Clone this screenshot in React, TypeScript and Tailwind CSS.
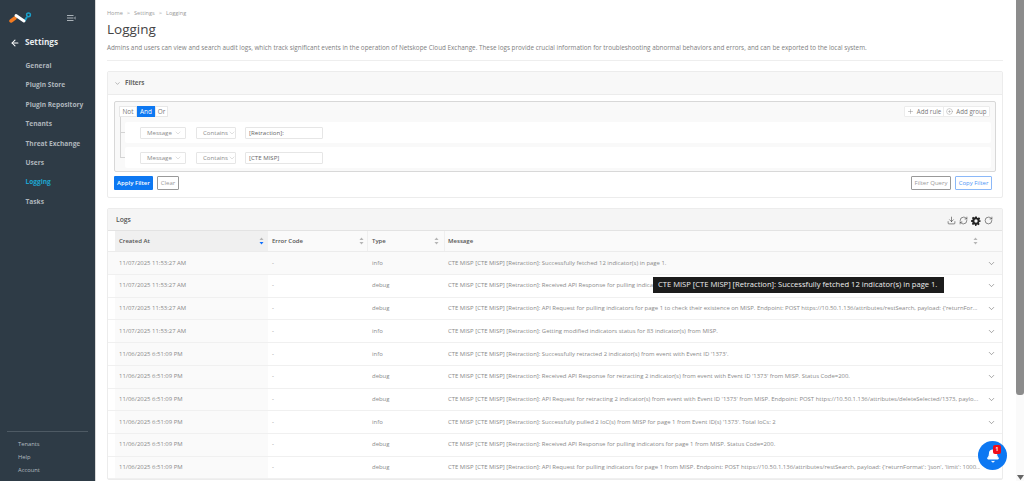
import { ChevronDown, ArrowLeft, Plus, CirclePlus, Download, RefreshCw, RotateCw, Bell } from "lucide-react";

const nav = ["General", "Plugin Store", "Plugin Repository", "Tenants", "Threat Exchange", "Users", "Logging", "Tasks"];
const P = "CTE MISP [CTE MISP] [Retraction]: ";
const rows: [string, string, string][] = [
  ["11/07/2025 11:53:27 AM", "info", "Successfully fetched 12 indicator(s) in page 1."],
  ["11/07/2025 11:53:27 AM", "debug", "Received API Response for pulling indicators for page 1 from MISP. Status Code=200."],
  ["11/07/2025 11:53:27 AM", "debug", "API Request for pulling indicators for page 1 to check their existence on MISP. Endpoint: POST https://10.50.1.136/attributes/restSearch, payload: {'returnFor..."],
  ["11/07/2025 11:53:27 AM", "info", "Getting modified indicators status for 83 indicator(s) from MISP."],
  ["11/06/2025 6:51:09 PM", "info", "Successfully retracted 2 indicator(s) from event with Event ID '1373'."],
  ["11/06/2025 6:51:09 PM", "debug", "Received API Response for retracting 2 indicator(s) from event with Event ID '1373' from MISP. Status Code=200."],
  ["11/06/2025 6:51:09 PM", "debug", "API Request for retracting 2 indicator(s) from event with Event ID '1373' from MISP. Endpoint: POST https://10.50.1.136/attributes/deleteSelected/1373, paylo..."],
  ["11/06/2025 6:51:09 PM", "info", "Successfully pulled 2 IoC(s) from MISP for page 1 from Event ID(s) '1373'. Total IoCs: 2"],
  ["11/06/2025 6:51:09 PM", "debug", "Received API Response for pulling indicators for page 1 from MISP. Status Code=200."],
  ["11/06/2025 6:51:09 PM", "debug", "API Request for pulling indicators for page 1 from MISP. Endpoint: POST https://10.50.1.136/attributes/restSearch, payload: {'returnFormat': 'json', 'limit': 1000..."],
];

function Sort({ active }: { active?: boolean }) {
  return (
    <svg width="5" height="8" viewBox="0 0 5 8" className="shrink-0">
      <path d="M2.500 0.500 L4.500 3 H0.500 Z" fill="#b5b5b5" />
      <path d="M2.500 7.500 L4.500 5 H0.500 Z" fill={active ? "#0d6efd" : "#b5b5b5"} />
    </svg>
  );
}

function Select({ label, w }: { label: string; w: string }) {
  return (
    <div className={`${w} h-[12px] bg-white border border-[#e6e6e6] rounded-[1px] flex items-center justify-between pl-[6px] pr-[3px] text-[6.1px] text-[#8c8c8c]`}>
      <span>{label}</span>
      <ChevronDown size={8} strokeWidth={1} color="#a0a0a0" className="shrink-0" />
    </div>
  );
}

function Rule({ value }: { value: string }) {
  return (
    <div className="h-[21px] ml-[6px] bg-white rounded-[2px] flex items-center pl-[15px] relative">
      <span className="absolute left-[-5px] top-[10px] w-[5px] border-b border-[#d4d4d4]" />
      <Select label="Message" w="w-[46px]" />
      <div className="w-[10px]" />
      <Select label="Contains" w="w-[40px]" />
      <div className="w-[9px]" />
      <div className="w-[78px] h-[12px] border border-[#e6e6e6] rounded-[1px] flex items-center pl-[3px] text-[6.1px] text-[#666]">{value}</div>
    </div>
  );
}

export default function App() {
  return (
    <div className="h-[481px] w-[1024px] overflow-hidden flex bg-white font-['Open_Sans',sans-serif] relative">
      <aside className="w-[95px] shrink-0 bg-[#2e3b46] flex flex-col">
        <div className="flex items-center h-[36px] pl-[9px] pr-[19px] justify-between">
          <svg width="24" height="14" viewBox="0 0 24 14">
            <path d="M15.500 10 L18 6" fill="none" stroke="#1b9fc9" strokeWidth="2" />
            <path d="M2 10 L6 7" fill="none" stroke="#f47b20" strokeWidth="3.500" strokeLinecap="round" />
            <path d="M7 4.500 L15 10" fill="none" stroke="#fff" strokeWidth="3" strokeLinecap="round" />
            <circle cx="19.500" cy="3.800" r="1.900" fill="none" stroke="#1b9fc9" strokeWidth="1.500" />
          </svg>
          <svg width="9" height="6" viewBox="0 0 9 6" stroke="#aab2b8" strokeWidth="1" fill="none">
            <path d="M0 .5H6.500M0 3H6.500M0 5.500H6.500M9 1.500L7.500 3L9 4.500" />
          </svg>
        </div>
        <div className="flex items-center h-[13px] pl-[10px] gap-[5px] text-white">
          <ArrowLeft size={10} strokeWidth={2.5} />
          <span className="text-[8.2px] font-bold text-[#e8ecef]">Settings</span>
        </div>
        <nav className="flex flex-col mt-[7px]">
          {nav.map((n) => (
            <div key={n} className={`h-[19.45px] flex items-center pl-[25.5px] text-[6.6px] font-bold ${n === "Logging" ? "text-[#1da5cf]" : "text-[#aeb6bc]"}`}>
              {n}
            </div>
          ))}
        </nav>
        <div className="mt-auto mx-[7px] mb-[5px] border-t border-[#4e5a64] pt-[6px] pl-[11px] flex flex-col gap-[1px]">
          {["Tenants", "Help", "Account"].map((n) => (
            <div key={n} className="h-[12px] flex items-center text-[5.8px] text-[#b4bbc0]">{n}</div>
          ))}
        </div>
      </aside>
      <div className="w-[1px] shrink-0 bg-[#d8d8d8]" />

      <main className="w-[907px] shrink-0 pl-[11px]">
        <div className="flex items-center gap-[4px] text-[5.6px] text-[#9b9b9b] pt-[10px] h-[17px]">
          <span>Home</span><span>&gt;</span><span>Settings</span><span>&gt;</span><span>Logging</span>
        </div>
        <h1 className="text-[13.5px] leading-[18px] text-[#444] mt-[3px]">Logging</h1>
        <p className="text-[6.33px] leading-[10px] text-[#808080] mt-[5px] whitespace-nowrap">
          Admins and users can view and search audit logs, which track significant events in the operation of Netskope Cloud Exchange. These logs provide crucial information for troubleshooting abnormal behaviors and errors, and can be exported to the local system.
        </p>
        <div className="border-t border-[#eeeeee] mt-[7px]" />

        <section className="mt-[10px] h-[127px] border border-[#ececec] rounded-[2px] flex flex-col">
          <div className="h-[23px] shrink-0 bg-[#f8f8f8] border-b border-[#ececec] flex items-center pl-[6px] gap-[4px]">
            <ChevronDown size={7} strokeWidth={1.5} color="#666" />
            <span className="text-[6.2px] font-bold text-[#666]">Filters</span>
          </div>
          <div className="px-[6px] pt-[6px]">
            <div className="h-[71px] border border-[#d8d8d8] rounded-[2px] bg-[#f9f9f9] flex flex-col px-[4px] pt-[4px]">
              <div className="flex justify-between pr-[1px]">
                <div className="flex h-[11px] text-[6.4px] bg-white">
                  <span className="w-[18px] border border-[#e8e8e8] text-[#777] flex items-center justify-center">Not</span>
                  <span className="w-[18px] bg-[#0d78f2] text-white flex items-center justify-center">And</span>
                  <span className="w-[13px] border border-[#e8e8e8] text-[#777] flex items-center justify-center">Or</span>
                </div>
                <div className="flex h-[11px] text-[6.2px] text-[#777] bg-white border border-[#ececec] rounded-[1px]">
                  <span className="w-[39px] flex items-center justify-center gap-[3px] border-r border-[#ececec]"><Plus size={7} strokeWidth={1.2} color="#666" />Add rule</span>
                  <span className="w-[45px] flex items-center justify-center gap-[3px]"><CirclePlus size={7} strokeWidth={1} color="#666" />Add group</span>
                </div>
              </div>
              <div className="mt-[5px] flex flex-col gap-[4px] relative">
                <span className="absolute left-[1px] top-[-5px] bottom-[10px] border-l border-[#d4d4d4]" />
                <Rule value="[Retraction]:" />
                <Rule value="[CTE MISP]" />
              </div>
            </div>
            <div className="flex justify-between mt-[4px] pr-[4px] h-[14px] text-[6px]">
              <div className="flex gap-[4px]">
                <span className="w-[39px] bg-[#0d78f2] text-white font-semibold rounded-[1px] flex items-center justify-center">Apply Filter</span>
                <span className="w-[22px] border border-[#999] text-[#999] rounded-[1px] flex items-center justify-center">Clear</span>
              </div>
              <div className="flex gap-[4px]">
                <span className="w-[40px] border border-[#999] text-[#999] rounded-[1px] flex items-center justify-center">Filter Query</span>
                <span className="w-[37px] border border-[#8bb8f8] text-[#4d94f5] rounded-[1px] flex items-center justify-center">Copy Filter</span>
              </div>
            </div>
          </div>
        </section>

        <section className="mt-[10px] border border-[#ececec] rounded-[2px]">
          <div className="h-[22px] bg-[#f5f5f5] border-b border-[#e3e3e3] flex items-center justify-between pl-[8px] pr-[9px] pt-[2px]">
            <span className="text-[6.8px] font-semibold text-[#555]">Logs</span>
            <div className="flex items-center gap-[3px] text-[#333]">
              <Download size={9} strokeWidth={1.5} />
              <RefreshCw size={9} strokeWidth={1.5} />
              <svg width="10" height="10" viewBox="0 0 24 24" fill="#222"><path fillRule="evenodd" d="M10 1h4l.6 3.200 1.900.8 2.700-1.800 2.800 2.800-1.800 2.700.8 1.900L23 10v4l-3.200.6-.8 1.900 1.800 2.700-2.800 2.800-2.700-1.800-1.900.8L13 23.900h-3l-.6-3.200-1.900-.8-2.700 1.800-2.800-2.800 1.800-2.700-.8-1.900L0 14v-4l3.200-.6.8-1.900L2.200 4.800 5 2l2.700 1.800 1.900-.8zM12 8a4 4 0 1 0 0 8 4 4 0 0 0 0-8z" /></svg>
              <RotateCw size={9} strokeWidth={1.5} />
            </div>
          </div>
          <div className="flex h-[21.4px] border-b border-[#ececec] text-[6px] font-semibold text-[#555]">
            <div className="w-[7px] shrink-0" />
            <div className="w-[153px] shrink-0 bg-[#f0f0f0] flex items-center justify-between pl-[4px] pr-[4px]"><span>Created At</span><Sort active /></div>
            <div className="w-[100px] shrink-0 bg-[#fafafa] flex items-center justify-between pl-[4px] pr-[3px] border-r border-[#efefef]"><span>Error Code</span><Sort /></div>
            <div className="w-[77px] shrink-0 bg-[#fafafa] flex items-center justify-between pl-[4px] pr-[5px] border-r border-[#efefef]"><span>Type</span><Sort /></div>
            <div className="flex-1 min-w-0 bg-[#fafafa] flex items-center justify-between pl-[3px] pr-[24px]"><span>Message</span><Sort /></div>
          </div>
          {rows.map((r, i) => (
            <div key={i} className={`flex h-[22.7px] border-b border-[#f0f0f0] text-[5.95px] text-[#8a8a8a] items-stretch ${i === 0 ? "bg-[#fafafa]" : ""}`}>
              <div className="w-[7px] shrink-0" />
              <div className="w-[153px] shrink-0 bg-[#fafafa] flex items-center pl-[4px]">{r[0]}</div>
              <div className="w-[100px] shrink-0 flex items-center pl-[4px]">-</div>
              <div className="w-[77px] shrink-0 flex items-center pl-[4px]">{r[1]}</div>
              <div className="flex-1 min-w-0 flex items-center pl-[3px] whitespace-nowrap overflow-hidden">{P}{r[2]}</div>
              <div className="w-[22px] shrink-0 flex items-center justify-center"><ChevronDown size={9} strokeWidth={1.5} color="#666" /></div>
            </div>
          ))}
        </section>
      </main>

      <div className="ml-auto w-[8px] bg-[#fafafa] flex flex-col justify-between items-center">
        <div className="w-[8px] h-[395px] bg-[#8c8c8c] rounded-b-[3px]" />
        <svg width="7" height="5" viewBox="0 0 7 5" className="mb-[1px]"><path d="M0 0H7L3.500 5Z" fill="#666" /></svg>
      </div>

      <div className="absolute left-[653px] top-[277px] w-[291px] h-[16px] bg-[#1c1c1c] flex items-center pl-[5px] text-[7.6px] text-[#eeeeee] whitespace-nowrap">
        CTE MISP [CTE MISP] [Retraction]: Successfully fetched 12 indicator(s) in page 1.
      </div>
      <div className="absolute left-[978px] top-[441px] w-[29px] h-[29px] rounded-full bg-[#0d78f2] flex items-center justify-center">
        <Bell size={14} fill="#fff" color="#fff" />
        <span className="absolute left-[15px] top-[4px] w-[8px] h-[9px] bg-[#f00d1a] rounded-[2px] text-[5px] font-bold text-white flex items-center justify-center">1</span>
      </div>
    </div>
  );
}
